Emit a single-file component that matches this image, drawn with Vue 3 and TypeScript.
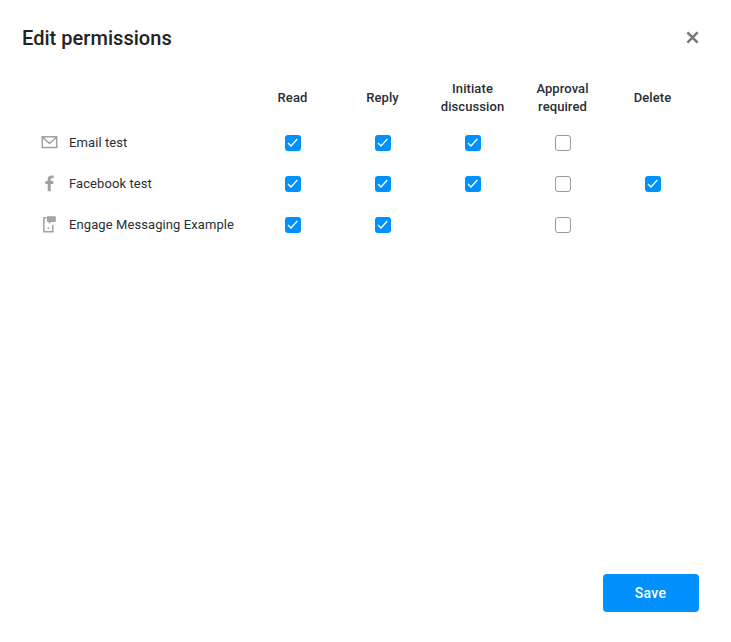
<script setup lang="ts">
import { reactive } from 'vue'

type Icon = 'mail' | 'facebook' | 'messaging'

interface Source {
  name: string
  icon: Icon
  // null means the permission does not apply to the source
  permissions: (boolean | null)[]
}

const columns: string[][] = [['Read'], ['Reply'], ['Initiate', 'discussion'], ['Approval', 'required'], ['Delete']]

const sources = reactive<Source[]>([
  { name: 'Email test', icon: 'mail', permissions: [true, true, true, false, null] },
  { name: 'Facebook test', icon: 'facebook', permissions: [true, true, true, false, true] },
  { name: 'Engage Messaging Example', icon: 'messaging', permissions: [true, true, null, false, null] },
])

function toggle(source: Source, index: number) {
  source.permissions[index] = !source.permissions[index]
}
</script>

<template>
  <section class="dialog">
    <header class="header">
      <h1 class="title">Edit permissions</h1>
      <button class="close" type="button" aria-label="Close">
        <svg width="13" height="13" viewBox="0 0 13 13"><path d="M1.4 1.4 11.6 11.6M11.6 1.4 1.4 11.6" /></svg>
      </button>
    </header>

    <div class="grid head">
      <span></span>
      <div v-for="column in columns" :key="column[0]" class="column">
        <span v-for="line in column" :key="line">{{ line }}</span>
      </div>
    </div>

    <div v-for="source in sources" :key="source.name" class="grid row">
      <div class="source">
        <svg v-if="source.icon === 'mail'" class="icon" width="17" height="17" viewBox="0 0 17 17">
          <path class="line" d="M1.3 2.8h14.4v10.8H1.3zM1.6 3.2l6.9 6.300 6.9-6.300" />
        </svg>
        <svg v-else-if="source.icon === 'facebook'" class="icon" width="17" height="17" viewBox="0 0 17 17">
          <path class="solid" d="M6.7 16.2V9H4.400V6.1h2.300V4.200C6.700 1.700 8.100.400 10.400.400c1 0 1.900.1 2.200.1v2.700h-1.500c-1.100 0-1.400.5-1.400 1.300v1.600h2.800l-.4 2.900H9.700v7.200z" />
        </svg>
        <svg v-else class="icon" width="17" height="17" viewBox="0 0 17 17">
          <path class="line" d="M5.4 1.800H2.900v13.900h8.900V9" />
          <path class="solid" d="M7 .2h6.800q1 0 1 1v3.900q0 1-1 1H10L7.800 8V6.100H7q-1 0-1-1V1.200q0-1 1-1zM6.700 11.500h1.500v1.500H6.700z" />
          <path class="dots" d="M8 3.200h1M10 3.200h1M12 3.200h1" />
        </svg>
        <span class="name">{{ source.name }}</span>
      </div>
      <div v-for="(value, i) in source.permissions" :key="i" class="cell">
        <button
          v-if="value !== null"
          type="button"
          role="checkbox"
          :aria-checked="value"
          class="checkbox"
          :class="{ checked: value }"
          @click="toggle(source, i)"
        >
          <svg v-if="value" width="16" height="16" viewBox="0 0 16 16"><path d="M3 8 6 11 12.300 4" /></svg>
        </button>
      </div>
    </div>

    <footer class="footer">
      <button type="button" class="save">Save</button>
    </footer>
  </section>
</template>

<style>
body {
  margin: 0;
  background: #fff;
}
</style>

<style scoped>
.dialog {
  box-sizing: border-box;
  width: 731px;
  height: 642px;
  padding: 24px 32px 30px 22px;
  display: flex;
  flex-direction: column;
  background: #fff;
  color: #2b2d35;
  font-family: Roboto, sans-serif;
  font-size: 13px;
  letter-spacing: 0.09px;
}
button {
  padding: 0;
  border: 0;
  background: none;
  font: inherit;
  cursor: pointer;
}
.header {
  display: flex;
  align-items: center;
  justify-content: space-between;
  height: 28px;
}
.title {
  margin: 0;
  font-size: 20px;
  font-weight: 500;
  line-height: 28px;
  letter-spacing: 0.04px;
  color: #222;
}
.close {
  display: flex;
  padding-bottom: 1px;
}
.close path {
  fill: none;
  stroke: #777;
  stroke-width: 2.5;
}
.grid {
  display: grid;
  grid-template-columns: 226px repeat(5, 90px);
  margin-right: -10px;
}
.head {
  height: 36px;
  margin: 28px -10px 6px 0;
  align-items: center;
}
.column {
  display: flex;
  flex-direction: column;
  align-items: center;
  padding-right: 1px;
  font-weight: 500;
  line-height: 18px;
}
.row {
  height: 41px;
}
.source {
  display: flex;
  align-items: center;
  gap: 11px;
  padding-left: 19px;
  white-space: nowrap;
}
.icon {
  flex: none;
}
.line {
  fill: none;
  stroke: #a0a0a0;
  stroke-width: 1.5;
}
.solid {
  fill: #a0a0a0;
}
.dots {
  fill: none;
  stroke: #ccc;
  stroke-width: 0.8;
}
.cell {
  display: flex;
  justify-content: center;
  padding-top: 13px;
}
.checkbox {
  box-sizing: border-box;
  display: flex;
  width: 16px;
  height: 16px;
  border: 1px solid #999;
  border-radius: 3px;
}
.checkbox.checked {
  border: 0;
  background: #0091ff;
}
.checkbox path {
  fill: none;
  stroke: #fff;
  stroke-width: 1.3;
}
.footer {
  display: flex;
  justify-content: flex-end;
  margin-top: auto;
}
.save {
  width: 96px;
  height: 38px;
  padding-right: 1px;
  border-radius: 4px;
  background: #0091ff;
  color: #fff;
  font-size: 14px;
  font-weight: 500;
  letter-spacing: 0.25px;
}
</style>
